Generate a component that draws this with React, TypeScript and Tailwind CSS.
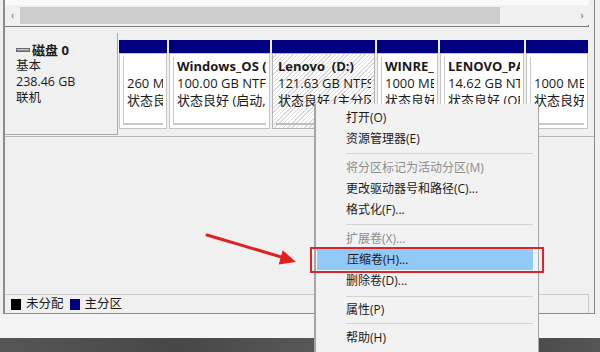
import React from "react";

type Part = {
  w: string;
  name?: string;
  size: string;
  status: string;
  hatched?: boolean;
};

const parts: Part[] = [
  { w: "w-[48px]", size: "260 MB", status: "状态良好 (EFI 系统分区)" },
  { w: "w-[101px]", name: "Windows_OS (C:)", size: "100.00 GB NTFS", status: "状态良好 (启动, 页面文件)" },
  { w: "w-[103px]", name: "Lenovo\u00a0 (D:)", size: "121.63 GB NTFS", status: "状态良好 (主分区)", hatched: true },
  { w: "w-[61px]", name: "WINRE_DRV", size: "1000 MB NTFS", status: "状态良好 (OEM 分区)" },
  { w: "w-[84px]", name: "LENOVO_PART", size: "14.62 GB NTFS", status: "状态良好 (OEM 分区)" },
  { w: "w-[62px]", size: "1000 MB", status: "状态良好 (恢复分区)" },
];

type MenuRow =
  | { kind: "item"; label: string; h: string; disabled?: boolean; active?: boolean }
  | { kind: "sep"; h: string };

const menu: MenuRow[] = [
  { kind: "item", label: "打开(O)", h: "h-[21px]" },
  { kind: "item", label: "资源管理器(E)", h: "h-[21px]" },
  { kind: "sep", h: "h-[8px]" },
  { kind: "item", label: "将分区标记为活动分区(M)", h: "h-[21px]", disabled: true },
  { kind: "item", label: "更改驱动器号和路径(C)...", h: "h-[21px]" },
  { kind: "item", label: "格式化(F)...", h: "h-[21px]" },
  { kind: "sep", h: "h-[9px]" },
  { kind: "item", label: "扩展卷(X)...", h: "h-[20px]", disabled: true },
  { kind: "item", label: "压缩卷(H)...", h: "h-[21px]", active: true },
  { kind: "item", label: "删除卷(D)...", h: "h-[22px]" },
  { kind: "sep", h: "h-[8px]" },
  { kind: "item", label: "属性(P)", h: "h-[20px]" },
  { kind: "sep", h: "h-[7px]" },
  { kind: "item", label: "帮助(H)", h: "h-[22px]" },
];

function DiskIcon() {
  return (
    <svg width="14" height="6" viewBox="0 0 14 6" className="mr-[2px]">
      <rect x="0.5" y="1.5" width="13" height="3" fill="#8c8c8c" stroke="#6a6a6a" strokeWidth="1" />
      <rect x="1" y="2" width="12" height="1" fill="#c8c8c8" />
    </svg>
  );
}

export default function App() {
  return (
    <div className="relative w-[600px] h-[352px] overflow-hidden bg-[#f0f0f0] text-[12px] text-[#1a1a1a] font-['Open_Sans','Noto_Sans_CJK_SC',sans-serif]">
      <div className="flex flex-col h-[338px]">
        {/* main frame */}
        <div className="ml-[3px] w-[592px] h-[314px] flex flex-col border-l-2 border-r border-b border-[#8c8c8c] bg-[#f0f0f0]">
          {/* scrollbar */}
          <div className="h-[5px] bg-[#fafafa] w-[584px]" />
          <div className="flex items-center h-[20px] w-[584px] bg-[#f0f0f0]">
            <div className="w-[15px] flex justify-center text-[10px] text-[#606060] leading-none">‹</div>
            <div className="w-[480px] h-[17px] bg-[#cdcdcd]" />
            <div className="flex-1" />
            <div className="w-[14px] flex justify-center text-[10px] text-[#606060] leading-none">›</div>
          </div>
          <div className="h-[2px] w-[584px] border-b border-r border-[#7a7a7a]" />
          <div className="h-[6px]" />

          {/* disk row */}
          <div className="flex h-[104px] border-b border-[#b8b8b8]">
            <div className="w-[113px] h-[102px] border-r border-b border-[#a8a8a8] pt-[9px] pl-[11px] leading-[16px] text-[12.5px]">
              <div className="flex items-center font-bold text-[13px]">
                <DiskIcon />
                <span>磁盘 0</span>
              </div>
              <div>基本</div>
              <div>238.46 GB</div>
              <div>联机</div>
            </div>
            <div className="flex gap-[2px] pl-[1px] pt-[7px] text-[13px]">
              {parts.map((p, i) => (
                <div key={i} className={`${p.w} flex flex-col`}>
                  <div className="h-[13px] bg-[#000080]" />
                  <div
                    className={
                      p.hatched
                        ? "h-[76px] border border-[#b4b4b4] p-[3px] bg-[repeating-linear-gradient(135deg,#ffffff_0px,#ffffff_2px,#dadada_2px,#dadada_3px)]"
                        : "h-[76px] border border-[#c4c4c4] p-[3px] bg-white"
                    }
                  >
                    <div
                      className={
                        p.hatched
                          ? "h-full border-b-2 border-[#bdbdbd] pl-[2px] pt-[1px] leading-[17px] overflow-hidden whitespace-nowrap"
                          : "h-full border-l border-b-2 border-[#c8c8c8] bg-white pl-[3px] pt-[1px] leading-[17px] overflow-hidden whitespace-nowrap"
                      }
                    >
                      <div className="font-bold h-[17px]">{p.name ?? ""}</div>
                      <div>{p.size}</div>
                      <div>{p.status}</div>
                    </div>
                  </div>
                </div>
              ))}
            </div>
          </div>

          <div className="flex-1" />

          {/* legend */}
          <div className="h-[19px] w-[584px] border-t border-r border-[#c8c8c8] flex items-center pl-[6px] gap-[5px] text-[12.5px]">
            <div className="w-[10px] h-[11px] bg-black" />
            <span>未分配</span>
            <div className="w-[10px] h-[11px] bg-[#000080] ml-[1px]" />
            <span>主分区</span>
          </div>
        </div>
        <div className="flex-1 bg-[#f4f4f4]" />
      </div>
      <div className="h-[14px] bg-[#4c4c4c] bg-[linear-gradient(90deg,#565656,#474747_30%,#5a5a5a_55%,#444444_80%,#555555)]" />

      {/* context menu */}
      <div className="absolute left-[314px] top-[104px] w-[225px] h-[260px] bg-[#f2f2f2] border-l-2 border-r border-[#a5a5a5] pt-[3px]">
        {menu.map((m, i) =>
          m.kind === "sep" ? (
            <div key={i} className={`${m.h} flex items-center`}>
              <div className="ml-[30px] mr-[5px] flex-1 h-px bg-[#d4d4d4]" />
            </div>
          ) : (
            <div
              key={i}
              className={`${m.h} flex items-center pl-[30px] ${m.active ? "bg-[#91c9f7] ml-[1px] mr-[5px] pl-[29px]" : ""} ${
                m.disabled ? "text-[#8d8d8d]" : "text-[#1a1a1a]"
              }`}
            >
              {m.label}
            </div>
          )
        )}
      </div>

      {/* red highlight box */}
      <div className="absolute left-[310px] top-[247px] w-[234px] h-[26px] border-2 border-[#d8262b]" />

      {/* red arrow */}
      <svg className="absolute left-0 top-0" width="600" height="352" viewBox="0 0 600 352">
        <line x1="207" y1="235" x2="283" y2="257.5" stroke="#e0211f" strokeWidth="3" strokeLinecap="round" />
        <polygon points="296,262 282.7,250.3 278.7,264.5" fill="#e0211f" />
      </svg>
    </div>
  );
}
